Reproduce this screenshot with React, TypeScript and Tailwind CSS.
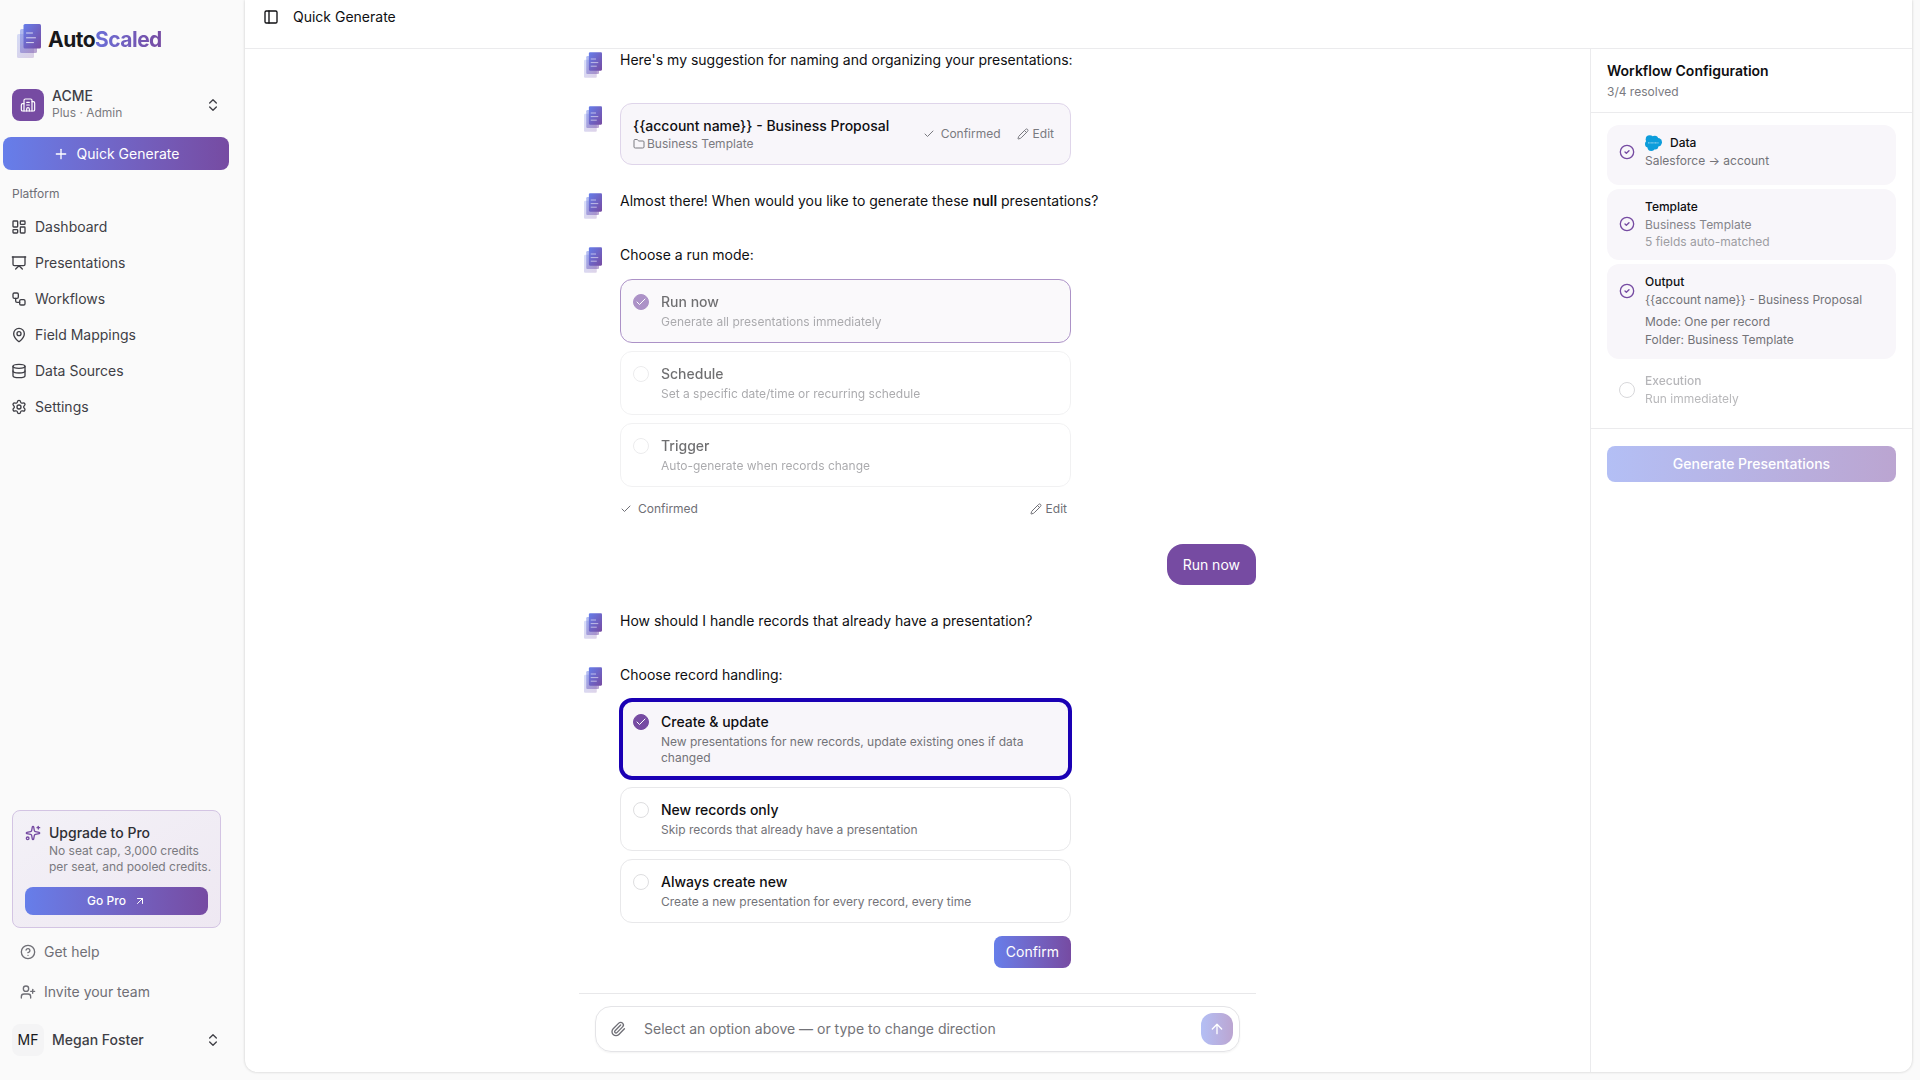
import { useId, useState, type ReactNode } from 'react'
import {
  ArrowUp,
  ArrowUpRight,
  Building2,
  Check,
  ChevronsUpDown,
  CircleCheck,
  CircleQuestionMark,
  Database,
  Folder,
  LayoutDashboard,
  MapPin,
  PanelLeft,
  Paperclip,
  Pencil,
  Plus,
  Presentation,
  Settings,
  Sparkles,
  UserPlus,
  Workflow,
} from 'lucide-react'
import { clsx } from 'clsx'

const navItems = [
  { name: 'Dashboard', icon: LayoutDashboard },
  { name: 'Presentations', icon: Presentation },
  { name: 'Workflows', icon: Workflow },
  { name: 'Field Mappings', icon: MapPin },
  { name: 'Data Sources', icon: Database },
  { name: 'Settings', icon: Settings },
]

const runModes = [
  { id: 'now', title: 'Run now', text: 'Generate all presentations immediately' },
  { id: 'schedule', title: 'Schedule', text: 'Set a specific date/time or recurring schedule' },
  { id: 'trigger', title: 'Trigger', text: 'Auto-generate when records change' },
]

const recordModes = [
  {
    id: 'upsert',
    title: 'Create & update',
    text: 'New presentations for new records, update existing ones if data changed',
  },
  { id: 'new', title: 'New records only', text: 'Skip records that already have a presentation' },
  { id: 'always', title: 'Always create new', text: 'Create a new presentation for every record, every time' },
]

function LogoMark({ className }: { className?: string }) {
  const id = useId()
  return (
    <svg viewBox="0 0 24 34" className={className} aria-hidden="true">
      <defs>
        <linearGradient id={id} x1="0" y1="0" x2="1" y2="1">
          <stop offset="0" stopColor="#667eea" />
          <stop offset="1" stopColor="#764ba2" />
        </linearGradient>
      </defs>
      <rect x="0" y="10" width="17" height="24" rx="1.5" fill={`url(#${id})`} opacity="0.25" />
      <rect x="3" y="5" width="17" height="24" rx="1.5" fill={`url(#${id})`} opacity="0.5" />
      <rect x="6.5" y="0" width="17.5" height="24.5" rx="1.5" fill={`url(#${id})`} />
      <path
        d="M9.5 9h6M9.5 13.8h9M9.5 18.6h7"
        stroke="#fff"
        strokeOpacity="0.75"
        strokeWidth="1"
        strokeLinecap="round"
      />
    </svg>
  )
}

function SalesforceLogo() {
  return (
    <svg viewBox="0 0 17 16" className="h-4 w-[17px]" aria-hidden="true">
      <g fill="#0d9ddb">
        <circle cx="4.7" cy="4.2" r="4" />
        <circle cx="9.8" cy="4.2" r="3.5" />
        <circle cx="12.8" cy="7.2" r="4.2" />
        <circle cx="3.6" cy="9" r="3.6" />
        <circle cx="6.2" cy="12.2" r="3.7" />
        <circle cx="10" cy="11.2" r="3.3" />
        <rect x="4" y="4" width="9" height="7" />
      </g>
      <path d="M3 7.8h10.5" stroke="#fff" strokeOpacity="0.5" strokeWidth="1.3" strokeDasharray="1 0.4" />
    </svg>
  )
}

function Sidebar() {
  return (
    <aside className="flex w-[245px] shrink-0 flex-col text-[#3f3f46]">
      <a href="#" className="mt-6 ml-[17px] flex items-start gap-[7px]">
        <LogoMark className="h-[34px] w-6" />
        <span className="text-[21px] leading-[31px] font-bold tracking-tight text-[#18181b]">
          Auto
          <span className="bg-linear-to-r from-[#6a6fd8] to-[#764ba2] bg-clip-text text-transparent">Scaled</span>
        </span>
      </a>

      <button className="mt-[30px] mr-6 ml-3 flex items-center gap-2 text-left">
        <span className="grid size-8 place-items-center rounded-lg bg-[#764ba2] text-white">
          <Building2 className="size-4" strokeWidth={1.75} />
        </span>
        <span className="flex-1">
          <span className="block text-sm leading-4 font-medium">ACME</span>
          <span className="block text-xs leading-[18px] text-[#7a7a80]">Plus · Admin</span>
        </span>
        <ChevronsUpDown className="size-4" />
      </button>

      <button className="mt-[15px] mr-4 ml-[3px] flex h-[33px] items-center justify-center gap-2 rounded-lg bg-linear-to-r from-[#667eea] to-[#764ba2] text-sm text-white">
        <Plus className="size-4" />
        Quick Generate
      </button>

      <p className="mt-4 ml-3 text-xs text-[#6f6f76]">Platform</p>
      <nav className="mt-[7px] flex flex-col">
        {navItems.map(item => (
          <a key={item.name} href="#" className="ml-[11px] flex h-9 items-center gap-2 text-sm">
            <item.icon className="size-4" />
            {item.name}
          </a>
        ))}
      </nav>

      <div className="mt-auto mr-6 ml-3 rounded-lg border border-[#d3c4e3] bg-linear-to-br from-[#f3f1f7] to-[#eee8f2] p-3">
        <div className="flex gap-2">
          <Sparkles className="mt-0.5 size-4 shrink-0 text-[#764ba2]" />
          <div>
            <p className="text-sm font-medium text-[#2f2f35]">Upgrade to Pro</p>
            <p className="text-xs whitespace-nowrap text-[#7a7a80]">
              No seat cap, 3,000 credits
              <br />
              per seat, and pooled credits.
            </p>
          </div>
        </div>
        <button className="mt-3 flex h-7 w-full items-center justify-center gap-2 rounded-lg bg-linear-to-r from-[#667eea] to-[#764ba2] text-xs font-medium text-white">
          Go Pro
          <ArrowUpRight className="size-3" />
        </button>
      </div>

      <a href="#" className="mt-1 ml-5 flex h-10 items-center gap-2 text-sm text-[#6f6f76]">
        <CircleQuestionMark className="size-4" />
        Get help
      </a>
      <a href="#" className="ml-5 flex h-10 items-center gap-2 text-sm text-[#6f6f76]">
        <UserPlus className="size-4" />
        Invite your team
      </a>
      <button className="mt-3 mr-6 mb-6 ml-3 flex items-center gap-2 text-left text-sm font-medium">
        <span className="grid size-8 place-items-center rounded-lg bg-[#f4f4f5] font-normal text-[#18181b]">MF</span>
        <span className="flex-1">Megan Foster</span>
        <ChevronsUpDown className="size-4" />
      </button>
    </aside>
  )
}

function BotMessage({ children }: { children: ReactNode }) {
  return (
    <div className="flex gap-[18px] pl-[5px]">
      <LogoMark className="mt-[3px] h-[26px] w-[18px] shrink-0" />
      <div className="min-w-0 leading-[22px]">{children}</div>
    </div>
  )
}

function ConfirmedMark() {
  return (
    <span className="flex items-center gap-1.5">
      <Check className="size-3" />
      Confirmed
    </span>
  )
}

function EditButton() {
  return (
    <button className="flex items-center gap-1">
      <Pencil className="size-3" />
      Edit
    </button>
  )
}

interface OptionListProps {
  name: string
  options: { id: string; title: string; text: string }[]
  disabled?: boolean
  highlight?: boolean
}

function OptionList({ name, options, disabled, highlight }: OptionListProps) {
  const [selected, setSelected] = useState(options[0].id)
  return (
    <div className={clsx('mt-[13px] flex w-[451px] flex-col gap-2', disabled && 'opacity-60')}>
      {options.map(option => {
        const active = option.id === selected
        return (
          <label
            key={option.id}
            className={clsx(
              'flex gap-3 rounded-xl border px-3 py-3',
              active ? 'border-[#764ba2] bg-[#f8f6fa]' : 'border-[#e8e8ea]',
              active && highlight && 'outline-4 -outline-offset-3 outline-[#1a00b4]',
            )}
          >
            <span className="mt-0.5 grid size-4 shrink-0">
              <input
                type="radio"
                name={name}
                checked={active}
                disabled={disabled}
                onChange={() => setSelected(option.id)}
                className="col-start-1 row-start-1 size-4 appearance-none rounded-full border border-[#dedee0] checked:border-[#764ba2] checked:bg-[#764ba2]"
              />
              {active && (
                <Check className="pointer-events-none z-10 col-start-1 row-start-1 size-3 place-self-center text-white" />
              )}
            </span>
            <span className="pr-5">
              <span className="block text-sm leading-5 font-medium">{option.title}</span>
              <span className="mt-0.5 block text-xs text-[#737378]">{option.text}</span>
            </span>
          </label>
        )
      })}
    </div>
  )
}

function Chat() {
  return (
    <section className="flex min-w-0 flex-1 flex-col">
      <div className="mx-auto flex w-full max-w-[677px] flex-1 flex-col gap-[25px] text-sm text-[#0f0f12]">
        <BotMessage>Here's my suggestion for naming and organizing your presentations:</BotMessage>
        <BotMessage>
          <div className="flex h-[62px] w-[451px] items-center justify-between rounded-xl border border-[#dfd5ea] bg-[#f8f6fa] pr-4 pl-3">
            <div>
              <p className="leading-5 font-medium">{'{{account name}} - Business Proposal'}</p>
              <p className="flex items-center gap-0.5 text-xs text-[#7a7a80]">
                <Folder className="size-3" />
                Business Template
              </p>
            </div>
            <div className="flex gap-4 text-xs text-[#7a7a80]">
              <ConfirmedMark />
              <EditButton />
            </div>
          </div>
        </BotMessage>
        <BotMessage>
          Almost there! When would you like to generate these <strong className="font-semibold">null</strong>{' '}
          presentations?
        </BotMessage>
        <BotMessage>
          Choose a run mode:
          <OptionList name="run-mode" options={runModes} disabled />
          <div className="mt-3 flex h-5 items-center justify-between pr-1 text-xs text-[#6f6f76]">
            <ConfirmedMark />
            <EditButton />
          </div>
        </BotMessage>
        <p className="self-end rounded-2xl rounded-br-lg bg-[#764ba2] px-4 py-2.5 leading-[21px] text-white">Run now</p>
        <BotMessage>How should I handle records that already have a presentation?</BotMessage>
        <BotMessage>
          Choose record handling:
          <OptionList name="record-mode" options={recordModes} highlight />
          <div className="mt-[13px] flex justify-end">
            <button className="h-8 rounded-lg bg-linear-to-r from-[#667eea] to-[#764ba2] px-3 text-white">Confirm</button>
          </div>
        </BotMessage>
      </div>

      <div className="mx-auto w-full max-w-[677px] border-t border-[#e8e8ea] px-4 pt-3 pb-5">
        <form
          className="flex h-[46px] items-center rounded-2xl border border-[#e4e4e7] pr-1.5 pl-3.5 shadow-xs"
          onSubmit={e => e.preventDefault()}
        >
          <button type="button" aria-label="Attach file" className="text-[#6f6f76]">
            <Paperclip className="size-4" />
          </button>
          <input
            type="text"
            aria-label="Message"
            placeholder="Select an option above — or type to change direction"
            className="ml-[18px] min-w-0 flex-1 text-sm outline-none placeholder:text-[#737378]"
          />
          <button
            aria-label="Send"
            className="grid size-8 place-items-center rounded-xl bg-linear-to-r from-[#b3bff5] to-[#bba5d1] text-white"
          >
            <ArrowUp className="size-4" />
          </button>
        </form>
      </div>
    </section>
  )
}

interface StepProps {
  title: string
  logo?: ReactNode
  pending?: boolean
  className?: string
  iconClassName?: string
  children: ReactNode
}

function Step({ title, logo, pending, className, iconClassName, children }: StepProps) {
  return (
    <li className={clsx('flex gap-2.5 rounded-xl px-3', pending ? 'opacity-50' : 'bg-[#f8f6fa]', className)}>
      {pending ? (
        <span className={clsx('size-4 shrink-0 rounded-full border border-[#b0b0b5]', iconClassName)} />
      ) : (
        <CircleCheck className={clsx('size-4 shrink-0 text-[#764ba2]', iconClassName)} />
      )}
      <div className="text-xs text-[#737378]">
        <p
          className={clsx(
            'flex h-[18px] items-center gap-2 font-medium',
            pending ? 'text-[#6f6f76]' : 'text-[#0f0f12]',
          )}
        >
          {logo}
          {title}
        </p>
        {children}
      </div>
    </li>
  )
}

function ConfigPanel() {
  return (
    <aside className="w-[322px] shrink-0 border-l border-[#ebebed]">
      <header className="border-b border-[#ebebed] px-4 pt-3 pb-3">
        <h2 className="text-sm font-semibold text-[#0f0f12]">Workflow Configuration</h2>
        <p className="mt-0.5 text-xs leading-[17px] text-[#7a7a80]">3/4 resolved</p>
      </header>
      <ul className="flex flex-col gap-1 border-b border-[#ebebed] px-4 pt-3 pb-5">
        <Step title="Data" logo={<SalesforceLogo />} className="h-[60px] pt-[9px]" iconClassName="mt-2.5">
          <p className="leading-[18px]">Salesforce → account</p>
        </Step>
        <Step title="Template" className="h-[71px] pt-[9px]" iconClassName="mt-[18px]">
          <p className="leading-[18px] text-[#85858a]">Business Template</p>
          <p className="text-[#9d9da2]">5 fields auto-matched</p>
        </Step>
        <Step title="Output" className="h-[95px] pt-[9px]" iconClassName="mt-2.5">
          <p className="leading-[18px]">{'{{account name}} - Business Proposal'}</p>
          <p className="mt-1 leading-[18px]">Mode: One per record</p>
          <p className="leading-[18px]">Folder: Business Template</p>
        </Step>
        <Step title="Execution" pending className="pt-[9px]" iconClassName="mt-2.5">
          <p className="leading-[18px]">Run immediately</p>
        </Step>
      </ul>
      <div className="px-4 pt-[17px]">
        <button
          disabled
          className="h-9 w-full rounded-lg bg-linear-to-r from-[#b3bff5] to-[#bba5d1] text-sm font-medium text-white"
        >
          Generate Presentations
        </button>
      </div>
    </aside>
  )
}

export default function App() {
  return (
    <div className="flex min-h-screen bg-[#fafafa] font-['Inter','Liberation_Sans',sans-serif]">
      <Sidebar />
      <main className="mr-2 mb-2 flex min-w-0 flex-1 flex-col rounded-b-xl bg-white shadow-[0_0_3px_rgba(0,0,0,0.2)]">
        <header className="flex h-[49px] items-start gap-3.5 border-b border-[#ebebed] px-[18px] pt-[7px] text-sm text-[#0f0f12]">
          <button aria-label="Toggle sidebar" className="mt-0.5">
            <PanelLeft className="size-4" />
          </button>
          <h1>Quick Generate</h1>
        </header>
        <div className="flex flex-1">
          <Chat />
          <ConfigPanel />
        </div>
      </main>
    </div>
  )
}
